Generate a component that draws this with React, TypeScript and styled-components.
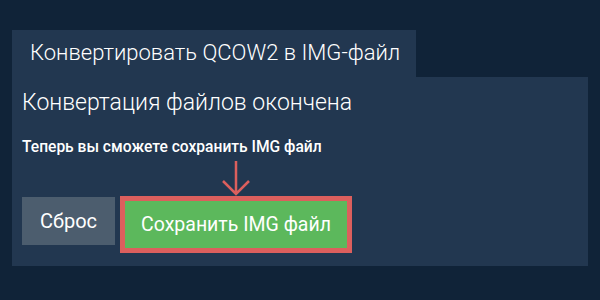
import React from "react";
import styled, { createGlobalStyle } from "styled-components";

const GlobalStyle = createGlobalStyle`
    html, body {
        margin: 0;
        padding: 0;
        background-color: #102338;
        font-family: Roboto, "Noto Sans", sans-serif;
    }
`

const Page = styled.div`
    width: 600px;
    height: 300px;
    padding: 30px 12px 0;
    box-sizing: border-box;
`

const Tab = styled.div`
    display: inline-block;
    width: 404px;
    height: 47px;
    box-sizing: border-box;
    padding-left: 18px;
    line-height: 46px;
    font-size: 22px;
    font-weight: 300;
    color: #ffffff;
    background-color: #223750;
    white-space: nowrap;
    vertical-align: top;
`

const Panel = styled.div`
    height: 189px;
    box-sizing: border-box;
    padding: 12px 10px 0;
    background-color: #223750;
    color: #ffffff;
`

const Heading = styled.div`
    font-size: 23px;
    font-weight: 300;
    line-height: 28px;
    white-space: nowrap;
`

const Hint = styled.div`
    margin-top: 20px;
    font-size: 15.6px;
    font-weight: 500;
    line-height: 20px;
    white-space: nowrap;
`

const Actions = styled.div`
    display: flex;
    align-items: flex-start;
    gap: 5px;
    margin-top: 40px;
`

const ArrowSlot = styled.div`
    position: relative;
`

const Arrow = styled.svg`
    position: absolute;
    left: 101px;
    top: -37px;
`

const Button = styled.button<{ $variant: "reset" | "save" }>`
    height: ${p => p.$variant === "save" ? "47px" : "48px"};
    margin-top: ${p => p.$variant === "save" ? "-1px" : "0"};
    border: ${p => p.$variant === "save" ? "5px solid #dc5f5d" : "none"};
    padding: 0 ${p => p.$variant === "save" ? "16px" : "18px"};
    box-sizing: content-box;
    background-color: ${p => p.$variant === "save" ? "#5cb85c" : "#4c5d6e"};
    color: #ffffff;
    font-family: Roboto, "Noto Sans", sans-serif;
    font-size: ${p => p.$variant === "save" ? "19.5px" : "20px"};
    font-weight: 400;
    cursor: pointer;
`

export default function App() {
    return (
        <>
            <GlobalStyle />
            <Page>
                <Tab>Конвертировать QCOW2 в IMG-файл</Tab>
                <Panel>
                    <Heading>Конвертация файлов окончена</Heading>
                    <Hint>Теперь вы сможете сохранить IMG файл</Hint>
                    <Actions>
                        <Button $variant="reset">Сброс</Button>
                        <ArrowSlot>
                            <Arrow width="30" height="36" viewBox="0 0 30 36">
                                <path d="M15 1 L15 34 M2 21 L15 34 L28 21" fill="none" stroke="#dc5f5d" strokeWidth="2.5" />
                            </Arrow>
                            <Button $variant="save">Сохранить IMG файл</Button>
                        </ArrowSlot>
                    </Actions>
                </Panel>
            </Page>
        </>
    );
}
